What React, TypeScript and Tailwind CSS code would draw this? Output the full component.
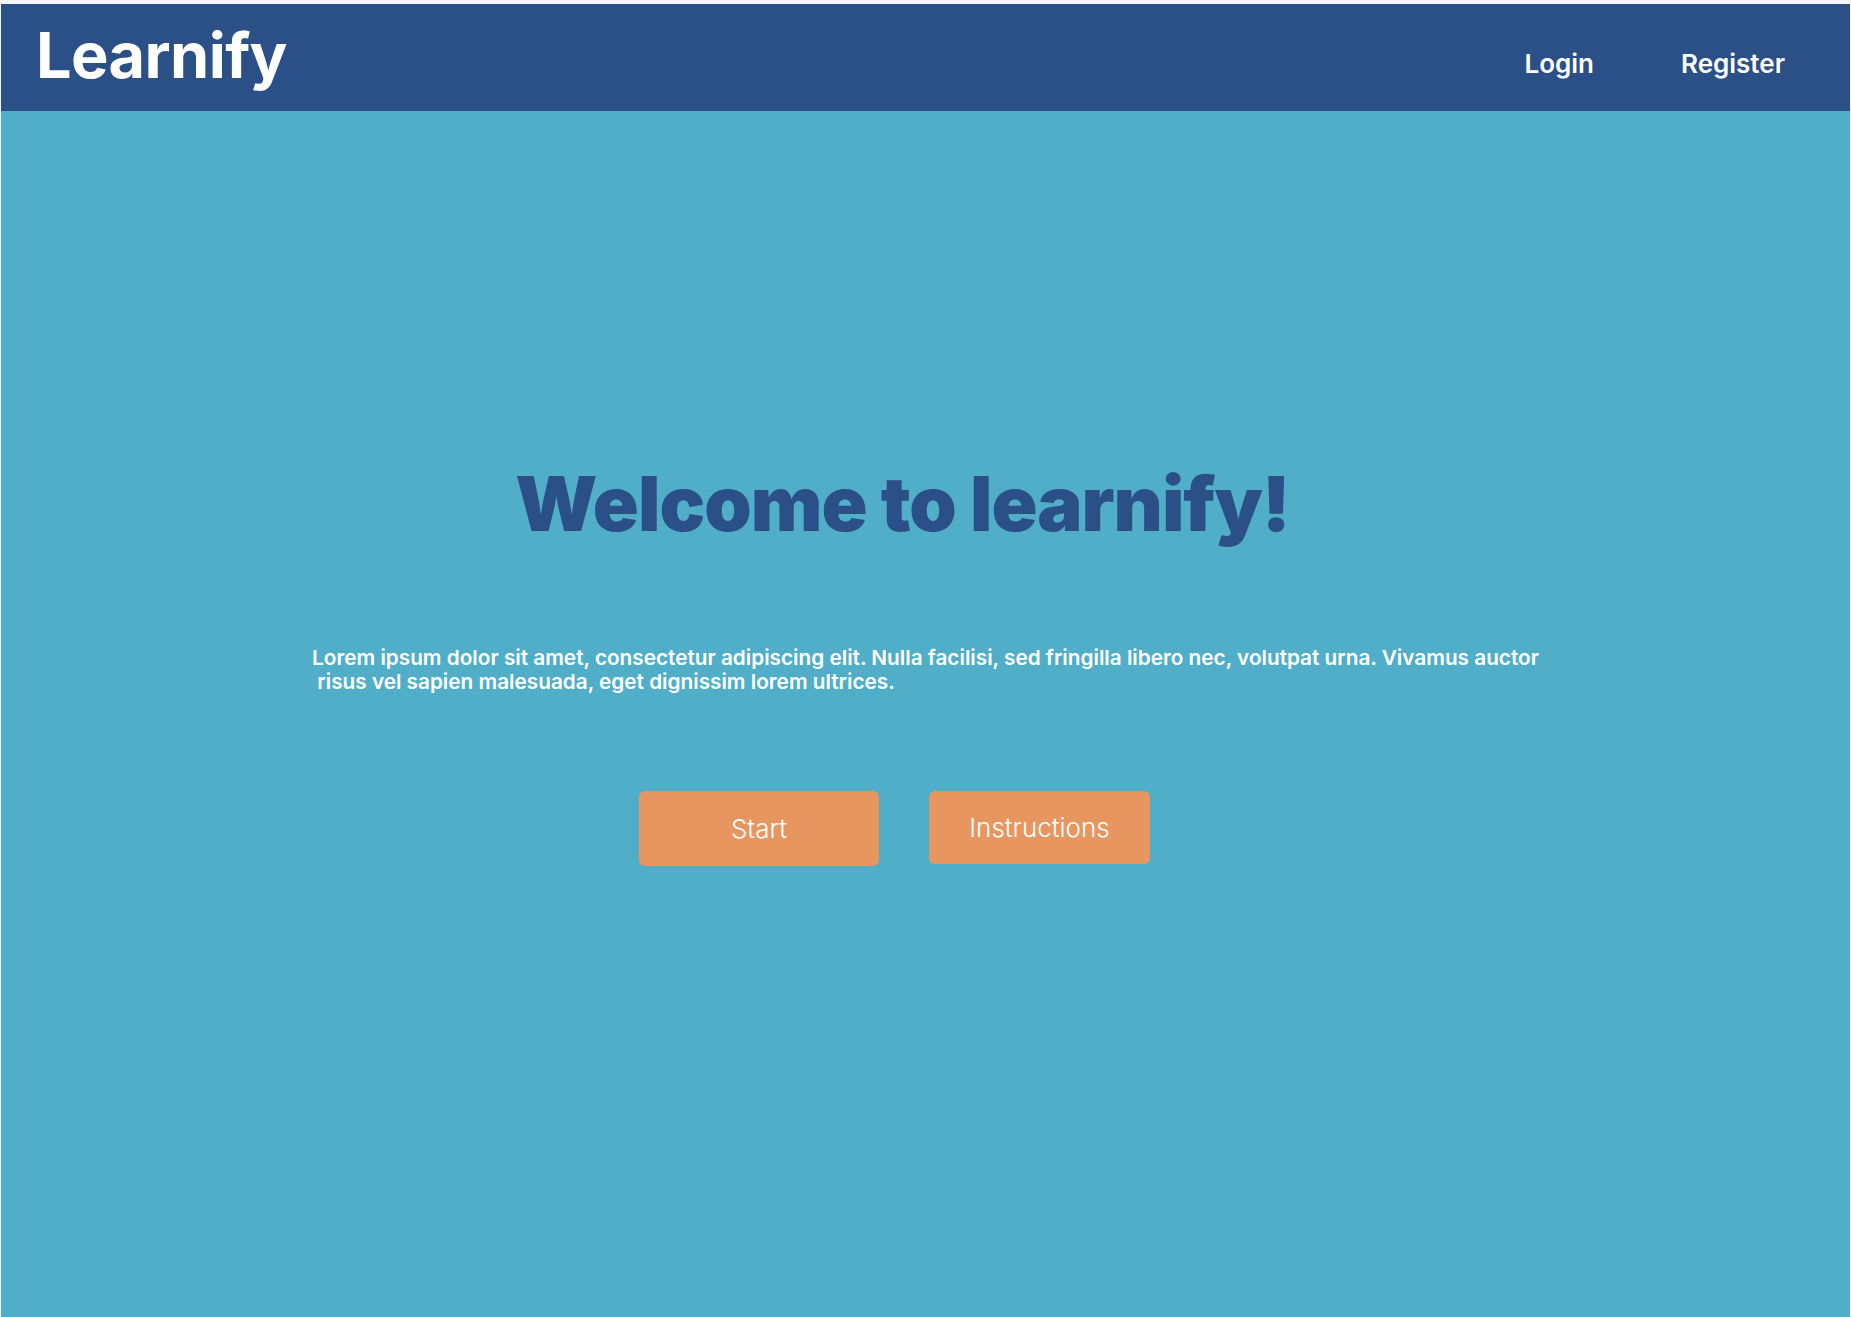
import React from "react";

export default function App() {
  return (
    <div
      className="w-full h-[1317px] bg-[#f3f4f6] pt-[4px] pl-px pr-px flex flex-col overflow-hidden"
      style={{ fontFamily: "Inter, 'Noto Sans', sans-serif" }}
    >
      <header className="h-[107px] shrink-0 bg-[#2b4f87] flex items-center justify-between pl-[35px] pr-[65px]">
        <div className="text-white font-bold text-[63px] leading-none tracking-[-0.6px] -mt-[4px]">
          Learnify
        </div>
        <nav className="flex items-center gap-[87px] mt-[12px]">
          <a className="text-white font-semibold text-[26px] leading-none">Login</a>
          <a className="text-white font-semibold text-[26px] leading-none">Register</a>
        </nav>
      </header>
      <main className="flex-1 bg-[#50aec8] flex flex-col">
        <h1 className="mt-[354px] text-center pr-[46px] text-[#2b4f87] font-black text-[76px] leading-none tracking-[-1px]">
          Welcome to learnify!
        </h1>
        <div className="mt-[105px] flex justify-center">
          <p className="text-white font-semibold text-[20.75px] leading-[24px] text-left">
            Lorem ipsum dolor sit amet, consectetur adipiscing elit. Nulla facilisi, sed fringilla libero nec, volutpat urna. Vivamus auctor
            <br />
            {"\u00a0risus vel sapien malesuada, eget dignissim lorem ultrices."}
          </p>
        </div>
        <div className="mt-[97px] flex items-start gap-[50px] pl-[638px]">
          <button className="w-[240px] h-[75px] rounded-[6px] bg-[#e8965f] text-white text-[26px] font-light">
            Start
          </button>
          <button className="w-[221px] h-[73px] rounded-[6px] bg-[#e8965f] text-white text-[26px] font-light">
            Instructions
          </button>
        </div>
      </main>
    </div>
  );
}
